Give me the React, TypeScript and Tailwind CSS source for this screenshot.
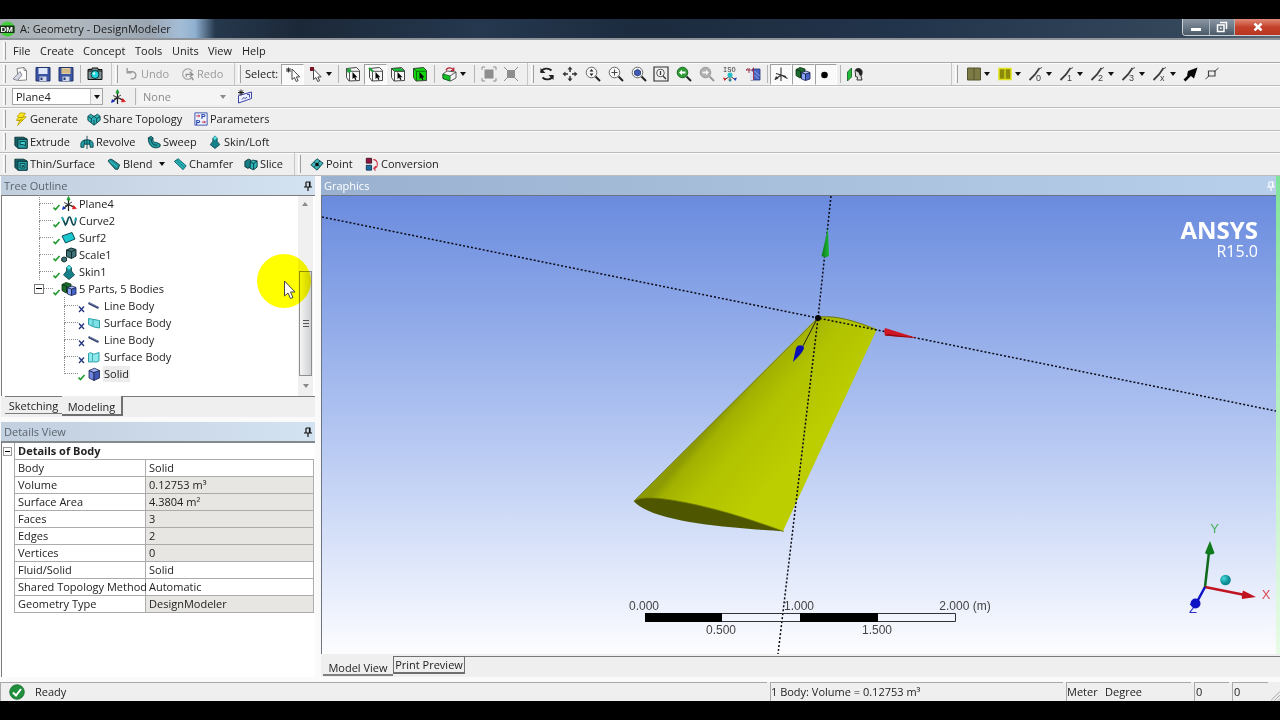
import type { ReactNode } from "react";

type Kids = { children?: ReactNode };

/* ---------- small building blocks ---------- */

function Ico({ children }: Kids) {
  return (
    <svg viewBox="0 0 16 16" className="h-4 w-4 shrink-0" aria-hidden="true">
      {children}
    </svg>
  );
}

function SmallIco({ children }: Kids) {
  return (
    <svg viewBox="0 0 16 16" className="h-3.5 w-3.5 shrink-0" aria-hidden="true">
      {children}
    </svg>
  );
}

function Caret({ muted = false }: { muted?: boolean }) {
  return (
    <svg viewBox="0 0 6 4" className="h-1 w-1.5 shrink-0" aria-hidden="true">
      <path d="M0 0h6L3 4z" fill={muted ? "#8a8a8a" : "#111"} />
    </svg>
  );
}

function Grip() {
  return (
    <div className="flex w-2 shrink-0 self-stretch py-0.5 pl-[3px]">
      <div className="w-[3px] border-r border-l border-r-[#a0a0a0] border-l-white" />
    </div>
  );
}

function Sep() {
  return (
    <div className="flex w-1.5 shrink-0 justify-center self-stretch py-0.5">
      <div className="w-px bg-[#b4b4b4]" />
    </div>
  );
}

function Group({ className, children }: Kids & { className: string }) {
  return (
    <div className={`flex items-center border-r border-[#c6c6c6] ${className}`}>
      <Grip />
      {children}
    </div>
  );
}

function IconButton({
  label,
  pressed = false,
  disabled = false,
  caret = false,
  className = "w-[23px]",
  children,
}: Kids & { label: string; pressed?: boolean; disabled?: boolean; caret?: boolean; className?: string }) {
  return (
    <button
      type="button"
      aria-label={label}
      aria-pressed={pressed || undefined}
      disabled={disabled}
      className={`flex h-[21px] shrink-0 items-center justify-center gap-0.5 border ${
        pressed ? "border-t-[#a0a0a0] border-r-white border-b-white border-l-[#a0a0a0] bg-[#fafafa]" : "border-transparent"
      } ${className}`}
    >
      {children}
      {caret && <Caret />}
    </button>
  );
}

function TextButton({ label, icon, className, caret = false, disabled = false }: { label: string; icon: ReactNode; className: string; caret?: boolean; disabled?: boolean }) {
  return (
    <button type="button" disabled={disabled} className={`flex shrink-0 items-center gap-0.5 whitespace-nowrap pl-px text-left disabled:text-[#9a9a9a] ${className}`}>
      {icon}
      <span>{label}</span>
      {caret && (
        <span className="ml-1 flex">
          <Caret />
        </span>
      )}
    </button>
  );
}

/* ---------- drawings ---------- */

const Cube = () => (
  <g stroke="#18224f" strokeWidth=".8" strokeLinejoin="round">
    <path d="M3 4.500 8 6.500v8L3 12z" fill="#6f86dc" />
    <path d="M8 6.500l5.500-2v7.500L8 14.500z" fill="#4057b4" />
    <path d="M3 4.500 8.500 2.200l5 2.300L8 6.500z" fill="#9fb2f2" />
  </g>
);

const TwoCubes = () => (
  <Ico>
    <path d="M1 3.500 5 1.500l5 1.500v7.500L5 12 1 9.500z" fill="#1d6b2c" stroke="#0b2d12" strokeWidth=".8" />
    <path d="M1 3.500 5.500 5v6.500" fill="none" stroke="#0b2d12" strokeWidth=".8" />
    <g stroke="#18224f" strokeWidth=".8">
      <path d="M6.500 6.500 10.500 8v6.500l-4-1.500z" fill="#8ba4f5" />
      <path d="M10.500 8l4.500-1.500V13l-4.500 1.500z" fill="#4763c8" />
      <path d="M6.500 6.500 11 5l4 1.500L10.500 8z" fill="#b4c4fb" />
    </g>
  </Ico>
);

const AxesIcon = () => (
  <Ico>
    <path d="M7.500 15V3M7.500 8.500l-5 4M7.500 8.500l6 3" stroke="#222" strokeWidth="1.200" fill="none" />
    <path d="M3 6.500l9 4M4 10l7-4" stroke="#333" strokeWidth=".9" />
    <path d="M6 4h3L7.500 .5z" fill="#1fa038" stroke="#1fa038" />
    <path d="M1 14l1-4 3 2.500z" fill="#1a2cc0" />
    <path d="M15.500 12.500l-4 .5 1-3.500z" fill="#e01818" stroke="#e01818" strokeWidth=".6" />
  </Ico>
);

const CursorPath = ({ x = 0, y = 0 }: { x?: number; y?: number }) => (
  <path transform={`translate(${x} ${y})`} d="M0 0v10.500l2.500-2 1.700 4 1.900-.8-1.700-3.800h3.300z" fill="#fff" stroke="#333" strokeWidth=".9" />
);

const SelectBox = ({ mode }: { mode: "point" | "edge" | "face" | "body" }) => (
  <Ico>
    <path d="M1.500 2.500 11.500 1.500l3 3v10l-10.500.5-2.500-3.500z" fill={mode === "body" ? "#12d512" : "#f7f7f7"} stroke="#333" strokeWidth=".9" />
    {mode === "face" && <path d="M1.500 2.500h9.500l3.500 2.800H4.500z" fill="#12c832" stroke="#0b5a18" strokeWidth=".6" />}
    <path d="M1.500 2.500 4.500 5.300h10M4.500 5.300V15" fill="none" stroke={mode === "body" ? "#07640b" : "#444"} strokeWidth=".9" />
    {mode === "point" && <circle cx="4" cy="4.500" r="2.300" fill="#29a347" />}
    {mode === "edge" && <path d="M1 2l4 3.500" stroke="#18a035" strokeWidth="2.200" />}
    <path d="M7.500 6v7l1.700-1.400 1 2.400 1.200-.5-1-2.300h2z" fill="#050505" />
  </Ico>
);

const Lens = ({ children, ring = "#666", handle = "#222", fill = "#f7f7f7" }: Kids & { ring?: string; handle?: string; fill?: string }) => (
  <Ico>
    <path d="M10.500 10.500l4.500 4.500" stroke={handle} strokeWidth="2" />
    <circle cx="6.500" cy="6.500" r="5.300" fill={fill} stroke={ring} strokeWidth="1" />
    {children}
  </Ico>
);

const EdgeIcon = ({ mark }: { mark: string }) => (
  <Ico>
    <path d="M1.500 14 7 8.500 11.500 2" stroke="#3c3c3c" strokeWidth="1.800" fill="none" />
    <path d="M10 3.500l4-2" stroke="#555" strokeWidth="1" />
    <text x="8" y="14.500" fontSize="9" fontFamily="Liberation Sans, sans-serif" fill="#444">{mark}</text>
  </Ico>
);

const Pin = ({ color = "#111" }: { color?: string }) => (
  <svg viewBox="0 0 10 10" className="h-2.5 w-2.5" aria-hidden="true">
    <path d="M3 1h4v5M3 1v5M1 6h8M5 6v4M6.500 1v5" stroke={color} strokeWidth="1.200" fill="none" />
  </svg>
);

const Check = () => (
  <svg viewBox="0 0 8 8" className="mt-1.5 h-2 w-2 shrink-0" aria-hidden="true">
    <path d="M.5 4.500 2.500 6.500l4-4.500" stroke="#1f9a2c" strokeWidth="1.600" fill="none" />
  </svg>
);

const Cross = () => (
  <svg viewBox="0 0 8 8" className="mt-1.5 h-2 w-2 shrink-0" aria-hidden="true">
    <path d="M1 1.500l5 5.500M6 1.500l-5 5.500" stroke="#23357f" strokeWidth="1.300" fill="none" />
  </svg>
);

const CurveIcon = () => (
  <Ico>
    <path d="M1 4l3.500 8C6.500 11 6.500 4 8.500 4s2 8 4.500 8c1 0 1.500-3 2-7" stroke="#0f4a52" strokeWidth="1.700" fill="none" />
    <path d="M1 4l1.500 3.500M14 8l1-3.500" stroke="#20a8b0" strokeWidth="1.800" />
  </Ico>
);

const SurfIcon = () => (
  <Ico>
    <path d="M1 6 11 2.500l3 6.500L4.500 13z" fill="#1cc8cf" stroke="#0b4a52" />
  </Ico>
);

const ScaleIcon = () => (
  <Ico>
    <path d="M5.500 3 10 1l5 1.500V9l-4.500 2.500-5-2z" fill="#3f7276" stroke="#102b2e" />
    <path d="M5.500 3l5 1.700L15 2.500M10.500 4.700v6.800" stroke="#102b2e" fill="none" />
    <path d="M.8 11 3 10l2.500.8v3L3.200 15l-2.400-1z" fill="#3f7276" stroke="#102b2e" />
  </Ico>
);

const SkinShape = () => (
  <>
    <path d="M8 1l2.500 2.500V7l3 4L8 15.500 2.500 11l3-4V3.500z" fill="#168088" stroke="#0a4046" strokeWidth=".8" />
    <path d="M8 1l2.500 2.500L8 6 5.500 3.500z" fill="#4fdde0" />
  </>
);

const LineBodyIcon = () => (
  <Ico>
    <path d="M2.500 5l10 5" stroke="#27355c" strokeWidth="2" />
    <path d="M3 4.700l9.500 4.700" stroke="#8ca8d8" strokeWidth=".7" />
  </Ico>
);

const SurfaceBodyA = () => (
  <Ico>
    <path d="M2.500 3.500 8 4.500l5.500 1V13L8 12l-5.500-2.500z" fill="#7fe0e6" stroke="#2aa0a8" />
    <path d="M7 4.500v6.500" stroke="#2aa0a8" strokeWidth=".8" />
  </Ico>
);

const SurfaceBodyB = () => (
  <Ico>
    <path d="M2.500 4.500c3-2 4 1 6 .5l4.500-1.500V12c-3 2-5 .5-6 .8L2.500 13z" fill="#8fe8ec" stroke="#2aa0a8" />
    <path d="M6.500 4v8" stroke="#2aa0a8" strokeWidth=".8" />
  </Ico>
);

/* ---------- title bar and menus ---------- */

function TitleBar() {
  return (
    <header className="flex h-[21px] items-start border-b-2 border-[#8d9399] bg-[linear-gradient(90deg,#a3abb0_0px,#b4bcc2_60px,#9ba6b2_150px,#a4bdd6_180px,#8fb0d0_195px,#26384d_215px,#1b2838_300px,#25384f_480px,#1c2b3e_640px,#22344b_900px,#34465a_1180px,#5b6a78_100%)]">
      <div className="flex h-[19px] flex-1 items-center gap-1 text-[#1d1d1d]">
        <svg viewBox="0 0 16 16" className="h-4 w-4" aria-hidden="true">
          <circle cx="7.500" cy="8" r="7.500" fill="#43cf3b" />
          <path d="M0 4.500h14.500v7.500H0z" fill="#182c18" />
          <text x="0.500" y="11" fontSize="8" fontWeight="700" fontFamily="Liberation Sans, sans-serif" fill="#fff">DM</text>
        </svg>
        <h1 className="whitespace-nowrap text-[11px]">A: Geometry - DesignModeler</h1>
      </div>
      <div className="flex h-[17px] w-[98px] overflow-hidden rounded-bl border-b border-l border-[#c9d0d6]">
        <button type="button" aria-label="Minimize" className="flex w-[27px] items-center justify-center border-r border-[#aab2ba] bg-linear-to-b from-[#8b97a3] to-[#4c5a69]">
          <span className="mt-1 h-[3px] w-2.5 bg-white" />
        </button>
        <button type="button" aria-label="Restore" className="flex w-[25px] items-center justify-center border-r border-[#aab2ba] bg-linear-to-b from-[#8b97a3] to-[#4c5a69]">
          <svg viewBox="0 0 12 12" className="h-3 w-3" aria-hidden="true">
            <path d="M4 1.500h6.500V8M1.500 4h6.500v6.500H1.500z" fill="none" stroke="#fff" strokeWidth="1.500" />
            <path d="M4 6.500h1.500v1.500H4z" fill="#fff" />
          </svg>
        </button>
        <button type="button" aria-label="Close" className="flex flex-1 items-center justify-center bg-linear-to-b from-[#e08a78] via-[#c4402a] to-[#b8361f]">
          <svg viewBox="0 0 10 8" className="h-2 w-2.5" aria-hidden="true">
            <path d="M1.500 .5l7 7M8.500 .5l-7 7" stroke="#fff" strokeWidth="2.500" />
          </svg>
        </button>
      </div>
    </header>
  );
}

const menus: [string, string][] = [
  ["File", "w-[27px]"],
  ["Create", "w-[43px]"],
  ["Concept", "w-[52px]"],
  ["Tools", "w-[37px]"],
  ["Units", "w-[36px]"],
  ["View", "w-[34px]"],
  ["Help", "w-[34px]"],
];

function MenuBar() {
  return (
    <nav className="flex h-[23px] items-center border-b border-[#a8a8a8]">
      <Grip />
      <div className="flex pl-[5px]">
        {menus.map(([name, width]) => (
          <button key={name} type="button" className={`text-left ${width}`}>
            {name}
          </button>
        ))}
      </div>
    </nav>
  );
}

const row = "flex items-center border-b border-[#bcbcbc] shadow-[inset_0_1px_0_#fcfcfc]";

function MainToolbar() {
  return (
    <div className={`${row} h-[23px] items-stretch`}>
      <Group className="w-[112px]">
        <IconButton label="New">
          <Ico>
            <path d="M5 2.500 12 1.500l2.500 3V14l-8 .5z" fill="#fff" stroke="#777" strokeWidth=".9" />
            <path d="M1 13 8 5.500l2 3.500-4.500 5.500z" fill="#d3d6e6" stroke="#777" strokeWidth=".8" />
            <path d="M12 1.500v3h2.500" fill="none" stroke="#777" strokeWidth=".8" />
          </Ico>
        </IconButton>
        <IconButton label="Save">
          <Ico>
            <path d="M1 1.500h14v13.500H1z" fill="#3a55a4" stroke="#21336b" />
            <path d="M3.500 2h9v6h-9z" fill="#dfe8fa" />
            <path d="M4.500 10.500h7V15h-7z" fill="#cfd6e6" />
            <path d="M5.500 11.500h2V14h-2z" fill="#22346c" />
          </Ico>
        </IconButton>
        <IconButton label="Save As">
          <Ico>
            <path d="M1 1.500h14v13.500H1z" fill="#3a55a4" stroke="#21336b" />
            <path d="M3.500 2h9v6h-9z" fill="#e6cf9e" />
            <path d="M3.500 4h9M3.500 6h9" stroke="#b09056" strokeWidth=".7" />
            <path d="M4.500 10.500h7V15h-7z" fill="#cfd6e6" />
            <path d="M5.500 11.500h2V14h-2z" fill="#22346c" />
          </Ico>
        </IconButton>
        <Sep />
        <IconButton label="Image capture">
          <Ico>
            <path d="M5 3.500V2h6v1.500h4v10H1v-10z" fill="#7f9294" stroke="#111" />
            <path d="M1 5h14M3 3.500V2.500" stroke="#111" />
            <circle cx="8" cy="8.500" r="4" fill="#1fd7df" stroke="#0b3438" />
            <circle cx="7" cy="7.500" r="1.200" fill="#d4fbfc" />
          </Ico>
        </IconButton>
      </Group>

      <Group className="w-[123px]">
        <div className="flex pl-1">
          <TextButton
            label="Undo"
            disabled
            className="w-[56px]"
            icon={
              <SmallIco>
                <path d="M3 5.500h5.500a4 4 0 1 1-2 7.500" fill="none" stroke="#9a9a9a" strokeWidth="1.600" />
                <path d="M2.500 1v5.500h5" fill="none" stroke="#9a9a9a" strokeWidth="1.600" />
              </SmallIco>
            }
          />
          <TextButton
            label="Redo"
            disabled
            className="w-[50px]"
            icon={
              <SmallIco>
                <path d="M12.500 12a6 6 0 1 1 .5-7" fill="none" stroke="#a8a8a8" strokeWidth="1.400" />
                <path d="M6 11V8.500h6.500M10 5.500l3.500 3-3.500 3M12 11.500l2 3.500" fill="none" stroke="#8f8f8f" strokeWidth="1.500" />
              </SmallIco>
            }
          />
        </div>
      </Group>

      <Group className="w-[293px]">
        <span className="w-[38px] pl-0.5">Select:</span>
        <IconButton label="New selection" pressed>
          <Ico>
            <path d="M1 4h5M3.500 1.500v5M1.500 2l4 4M5.500 2l-4 4" stroke="#222" strokeWidth=".9" />
            <CursorPath x={7} y={3} />
          </Ico>
        </IconButton>
        <IconButton label="Select mode" caret className="w-[31px]">
          <Ico>
            <path d="M2 1h4v4H2z" fill="#7d1022" />
            <CursorPath x={5.500} y={3} />
          </Ico>
        </IconButton>
        <Sep />
        <IconButton label="Selection filter: points">
          <SelectBox mode="point" />
        </IconButton>
        <IconButton label="Selection filter: edges" pressed>
          <SelectBox mode="edge" />
        </IconButton>
        <IconButton label="Selection filter: faces" className="w-[22px]">
          <SelectBox mode="face" />
        </IconButton>
        <IconButton label="Selection filter: bodies" className="w-[22px]">
          <SelectBox mode="body" />
        </IconButton>
        <Sep />
        <IconButton label="Extend selection" caret className="w-[34px]">
          <Ico>
            <path d="M1 8l4-3 9 1v6l-5.500 3L1 12.500z" fill="#f4f4f4" stroke="#333" strokeWidth=".8" />
            <path d="M1 8l7 2v5l-7-2.500z" fill="#14c427" stroke="#0a5a14" strokeWidth=".8" />
            <path d="M8 10l6-4" stroke="#333" strokeWidth=".8" />
            <path d="M4 4.500C5 1 10 1 11.500 4M11.800 1.500v3h-3" fill="none" stroke="#b81c30" strokeWidth="1.200" />
          </Ico>
        </IconButton>
        <Sep />
        <IconButton label="Expand" disabled>
          <Ico>
            <path d="M3.500 3.500h9v9h-9z" fill="#8e8e8e" />
            <path d="M1 4V1h3M12 1h3v3M15 12v3h-3M4 15H1v-3" fill="none" stroke="#8e8e8e" />
          </Ico>
        </IconButton>
        <IconButton label="Shrink" disabled className="w-[22px]">
          <Ico>
            <path d="M4 4h8v8H4z" fill="#8e8e8e" />
            <path d="M1 1l3 3M15 1l-3 3M15 15l-3-3M1 15l3-3" stroke="#8e8e8e" />
          </Ico>
        </IconButton>
      </Group>

      <Group className="w-[424px]">
        <div className="flex w-[228px]">
          <IconButton label="Rotate" className="flex-1">
            <Ico>
              <path d="M2 6.500C3 2 9.500 1.500 12.500 4.500M14 9.500c-1 4.500-7.500 5-10.500 2" fill="none" stroke="#222" strokeWidth="1.800" />
              <path d="M1.500 2v5h5zM14.500 14V9h-5z" fill="#222" />
            </Ico>
          </IconButton>
          <IconButton label="Pan" className="flex-1">
            <Ico>
              <path d="M8 3v3M8 10v3M3 8h3M10 8h3" stroke="#333" strokeWidth="1.500" />
              <path d="M8 .5l2.500 3h-5zM8 15.500l2.500-3h-5zM.5 8l3-2.500v5zM15.500 8l-3-2.500v5z" fill="#333" />
            </Ico>
          </IconButton>
          <IconButton label="Zoom" className="flex-1">
            <Lens>
              <path d="M6.500 3l2 2.500h-4zM6.500 10l2-2.500h-4z" fill="#222" />
            </Lens>
          </IconButton>
          <IconButton label="Zoom in" className="flex-1">
            <Lens>
              <path d="M3.500 6.500h6M6.500 3.500v6" stroke="#444" />
            </Lens>
          </IconButton>
          <IconButton label="Zoom to fit" className="flex-1">
            <Lens>
              <path d="M3.500 5l3-1.700 3 1.700v3.500l-3 1.500-3-1.500z" fill="#3e59b8" stroke="#16265c" strokeWidth=".7" />
            </Lens>
          </IconButton>
          <IconButton label="Box zoom" className="flex-1">
            <Ico>
              <path d="M1 1h14v14H1z" fill="none" stroke="#333" strokeWidth="1.200" />
              <circle cx="7.500" cy="7" r="3.800" fill="#fafafa" stroke="#555" />
              <path d="M7.500 5v4M10 10l3 3" stroke="#333" strokeWidth="1.300" />
            </Ico>
          </IconButton>
          <IconButton label="Previous view" className="flex-1">
            <Lens fill="#2f9b34" ring="#1b6a20">
              <path d="M3 6.500l3-2.800v1.800h3.500v2H6v1.800z" fill="#fff" />
            </Lens>
          </IconButton>
          <IconButton label="Next view" disabled className="flex-1">
            <Lens fill="#b0b0b0" ring="#9a9a9a" handle="#9a9a9a">
              <path d="M10 6.500l-3-2.800v1.800H3.500v2H7v1.800z" fill="#f2f2f2" />
            </Lens>
          </IconButton>
          <IconButton label="Isometric view" className="flex-1">
            <Ico>
              <text x="1" y="5.500" fontSize="7" fontFamily="Liberation Mono, monospace" fill="#333">ISO</text>
              <path d="M8 10l-5 3.500M8 10l5 3.500M8 10v5" stroke="#444" />
              <circle cx="8" cy="9" r="2.500" fill="#22c0c6" />
              <path d="M1 11.500l3.500 1-2 2.500z" fill="#d02020" />
              <path d="M15 11.500l-3.500 1 2 2.500z" fill="#2540b8" />
              <path d="M8 16l-2-2.500h4z" fill="#1f7f8a" />
            </Ico>
          </IconButton>
          <IconButton label="Look at face" className="flex-1">
            <Ico>
              <path d="M7 3h8v11H5.500" fill="#4864c2" stroke="#22326e" strokeWidth=".8" />
              <path d="M9.500 5l5 5M9.500 9l4 4" stroke="#93a6ea" />
              <path d="M5 5.500h4V14H5z" fill="#dfe3f4" />
              <path d="M1 4h8M4 2v5M1 4l2-1.500M8.500 1.500V14" stroke="#9c2540" strokeWidth=".9" fill="none" />
            </Ico>
          </IconButton>
        </div>
        <Sep />
        <div className="flex w-[67px]">
          <IconButton label="Display plane" pressed className="flex-1">
            <Ico>
              <path d="M8 1.500V15M8 9l-6 4.500M8 9l6.500 3.500M3 7.500l10 3" stroke="#333" strokeWidth="1.100" fill="none" />
              <path d="M1.500 14l1.500-4 2.500 2.500z" fill="#333" />
            </Ico>
          </IconButton>
          <IconButton label="Display model" pressed className="flex-1">
            <TwoCubes />
          </IconButton>
          <IconButton label="Display points" pressed className="flex-1">
            <Ico>
              <circle cx="6.500" cy="9" r="3.300" fill="#050505" />
            </Ico>
          </IconButton>
        </div>
        <Sep />
        <IconButton label="Look at">
          <Ico>
            <path d="M.5 6l4-4v9l-4 4z" fill="#21bb38" stroke="#0d5a1a" strokeWidth=".8" />
            <path d="M8 5c1-3 6-3 7 0 .5 3-.5 4-1 5l1 4H10l.5-3-2-.5L8.500 8z" fill="#ddd" stroke="#222" strokeWidth=".9" />
            <path d="M8 4.500c1-3 6-3 7 .5v3.500l-2 1.500-1.500-3.500z" fill="#222" />
          </Ico>
        </IconButton>
      </Group>

      <div className="flex flex-1 items-center">
        <Grip />
        <div className="w-0.5" />
        <IconButton label="Face colour" caret className="w-[31px]">
          <Ico>
            <path d="M1.500 2h13v12h-13z" fill="#7c7a45" stroke="#56552e" />
            <path d="M8 2v12" stroke="#56552e" />
          </Ico>
        </IconButton>
        <IconButton label="Edge colour" caret className="w-[31px]">
          <Ico>
            <path d="M2 2.500h12v11H2z" fill="#8b8a0a" stroke="#e2e21c" strokeWidth="1.500" />
            <path d="M8 2v12" stroke="#e2e21c" strokeWidth="1.200" />
          </Ico>
        </IconButton>
        {["0", "1", "2", "3", "x"].map((mark) => (
          <IconButton key={mark} label={`Edge joints ${mark}`} caret className="w-[31px]">
            <EdgeIcon mark={mark} />
          </IconButton>
        ))}
        <IconButton label="Display edge direction">
          <Ico>
            <path d="M1.500 14.500 7 9" stroke="#050505" strokeWidth="2.600" />
            <path d="M14.500 1.500 11 12.500 8 10 4 9.500 5 5z" fill="#050505" />
          </Ico>
        </IconButton>
        <IconButton label="Display vertices" className="w-5">
          <Ico>
            <path d="M1.500 13 5 10M10 6l4.500-4" stroke="#444" />
            <path d="M4.500 5h6.500v5H4.500z" fill="none" stroke="#444" strokeWidth="1.200" />
          </Ico>
        </IconButton>
      </div>
    </div>
  );
}

function PlaneToolbar() {
  return (
    <div className={`${row} h-[22px]`}>
      <Grip />
      <div className="relative ml-1 w-[91px]">
        <select aria-label="Active plane" className="block h-[17px] w-full appearance-none border border-[#a5a5a5] bg-white pl-[3px]">
          <option>Plane4</option>
        </select>
        <span className="pointer-events-none absolute inset-y-px right-px flex w-3 items-center justify-center border-l border-[#c8c8c8] bg-[#f2f2f2]">
          <Caret />
        </span>
      </div>
      <div className="flex w-[29px] items-center justify-center">
        <button type="button" aria-label="New plane">
          <AxesIcon />
        </button>
      </div>
      <Sep />
      <div className="relative w-[92px]">
        <select aria-label="Active sketch" disabled className="block h-[17px] w-full appearance-none bg-[#f4f4f4] pl-[5px] text-[#8a8a8a]">
          <option>None</option>
        </select>
        <span className="pointer-events-none absolute inset-y-0 right-1 flex items-center">
          <Caret muted />
        </span>
      </div>
      <IconButton label="New sketch" className="ml-0.5 w-[25px]">
        <Ico>
          <path d="M1.500 14V6.500L14.500 3v6.500z" fill="#eef0ff" stroke="#3b45a8" />
          <path d="M5 10.500c2-4 3 1 5-2.500M10 5.500h2.500v3" fill="none" stroke="#3b45a8" />
          <path d="M1 3.500h6M4 .5v6M2 1.500l4 4M6 1.500l-4 4" stroke="#111" strokeWidth=".9" />
        </Ico>
      </IconButton>
    </div>
  );
}

const Extrude = ({ inner }: { inner: string }) => (
  <SmallIco>
    <path d="M1 2.500h10l4 2v10.500H4.500L1 12z" fill="#156066" stroke="#0a2f33" />
    <path d="M4.500 5h10.500v10H4.500z" fill="#2aa7ad" stroke="#0a2f33" />
    <path d={inner} fill="#49d8dc" stroke="#0a2f33" />
  </SmallIco>
);

function FeatureToolbars() {
  return (
    <>
      <div className={`${row} h-[23px]`}>
        <Grip />
        <div className="flex pl-[5px]">
          <TextButton
            className="w-[73px]"
            label="Generate"
            icon={
              <SmallIco>
                <path d="M7 1l6 .5-2.500 3.500 3.500.5L4 15.500l2.500-5.500-4-.5L5.500 6 3.500 5.500z" fill="#f8e71c" stroke="#b79a00" strokeWidth=".9" />
                <path d="M6 6.500l5-.5M5 9.500l5-.5" stroke="#857000" strokeWidth=".8" />
              </SmallIco>
            }
          />
          <TextButton
            className="w-[107px]"
            label="Share Topology"
            icon={
              <SmallIco>
                <path d="M1 5l3-2.500L8 5l4-2.500L15 5v4.500L8 15l-7-5.500z" fill="#2cb4ba" stroke="#0b3f43" />
                <path d="M1 5l4 2.500V12M15 5l-4 2.500V12M5 7.500 8 5l3 2.500M8 9v6" fill="none" stroke="#0b3f43" />
              </SmallIco>
            }
          />
          <TextButton
            className="w-[80px]"
            label="Parameters"
            icon={
              <SmallIco>
                <path d="M1 1h14v14H1z" fill="#eef3ff" stroke="#2b48a6" />
                <text x="8" y="8" fontSize="8" fontWeight="700" fontFamily="Liberation Sans, sans-serif" fill="#1f3ea8">P</text>
                <text x="2" y="14.500" fontSize="8" fontWeight="700" fontFamily="Liberation Sans, sans-serif" fill="#1f3ea8">P</text>
                <path d="M2.500 4.500h4M5 3l1.500 1.500L5 6M9 11.500h4M11.500 10l1.500 1.500-1.500 1.500" stroke="#c02038" fill="none" />
              </SmallIco>
            }
          />
        </div>
      </div>
      <div className={`${row} h-[22px]`}>
        <Grip />
        <div className="flex pl-[5px]">
          <TextButton className="w-[66px]" label="Extrude" icon={<Extrude inner="M7 7.500h6v5l-2-1.500H7z" />} />
          <TextButton
            className="w-[67px]"
            label="Revolve"
            icon={
              <SmallIco>
                <path d="M1 10c0-6 14-6 14 0v4h-3.500v-3.500h-7V14H1z" fill="#23a4aa" stroke="#0b3f43" />
                <path d="M8 1v15M5 5.500v5M11 5.500v5" stroke="#0b3f43" />
              </SmallIco>
            }
          />
          <TextButton
            className="w-[61px]"
            label="Sweep"
            icon={
              <SmallIco>
                <path d="M1.500 3l3.500-1.500 2 2c-1 3 1 5.500 4 5l4 2v2.500c-5 4-14 1-13.500-10z" fill="#1f999f" stroke="#0b3f43" />
                <path d="M2 3.500l3 1.500 2-1.500M5 5c0 5 3 7 6.500 6.500" fill="none" stroke="#0b3f43" />
              </SmallIco>
            }
          />
          <TextButton className="w-[60px]" label="Skin/Loft" icon={<SmallIco><SkinShape /></SmallIco>} />
        </div>
      </div>
      <div className={`${row} h-[23px]`}>
        <Grip />
        <div className="flex w-[287px] self-stretch border-r border-[#c6c6c6] pl-[5px]">
          <TextButton className="w-[93px]" label="Thin/Surface" icon={<Extrude inner="M7 7.500h5.500v5H7zM9 9.500h2v1.500H9z" />} />
          <TextButton
            className="w-[66px]"
            label="Blend"
            caret
            icon={
              <SmallIco>
                <path d="M1.500 5c0-2.500 3-3 4.500-2l8.500 6-2 5h-3z" fill="#1a8f96" stroke="#0b3f43" />
                <path d="M3 4.500l8.500 6.500" stroke="#49d0d4" />
              </SmallIco>
            }
          />
          <TextButton
            className="w-[71px]"
            label="Chamfer"
            icon={
              <SmallIco>
                <path d="M1.500 5 6 2l9 8-3.500 4.500z" fill="#28b4b9" stroke="#0b5a60" />
                <path d="M4 3.500l9 8.500" stroke="#0b5a60" strokeWidth=".7" />
              </SmallIco>
            }
          />
          <TextButton
            className="w-[40px]"
            label="Slice"
            icon={
              <SmallIco>
                <path d="M1 5l4-2.500 3 1.200V11l-3.500 2L1 11z" fill="#177d84" stroke="#0b3235" />
                <path d="M7 6l3-2.500 5 1v7L11 14.500 7 13z" fill="#2bb4ba" stroke="#0b3235" />
                <path d="M7 6l4 1.500 4-3M11 7.500v7" fill="none" stroke="#0b3235" />
              </SmallIco>
            }
          />
        </div>
        <Grip />
        <div className="flex pl-[6px]">
          <TextButton
            className="w-[55px]"
            label="Point"
            icon={
              <SmallIco>
                <path d="M1 9 8 2l7 5-7 8z" fill="#3fb4ba" stroke="#0b3f43" />
                <path d="M4.500 5.500l7 5.500M4.500 12l7-7.500" stroke="#0b3f43" />
                <circle cx="8" cy="8.500" r="2" fill="#111" />
              </SmallIco>
            }
          />
          <TextButton
            className="w-[76px]"
            label="Conversion"
            icon={
              <SmallIco>
                <path d="M1.500 1.500h6v5.500h-6z" fill="#8e1640" stroke="#3d0a1c" />
                <path d="M1.500 9.500h6v5.500h-6z" fill="#1c6ea6" stroke="#0b3350" />
                <path d="M9.500 3c6 0 6 10 1 10M12.500 10.500 10 13l2 2.500" fill="none" stroke="#cf3043" strokeWidth="1.200" />
              </SmallIco>
            }
          />
        </div>
      </div>
    </>
  );
}

/* ---------- left panels ---------- */

function PanelHeader({ title }: { title: string }) {
  return (
    <div className="flex h-[19px] shrink-0 items-center justify-between bg-linear-to-r from-[#c2cfde] to-[#d3e2f1] pr-0.5 pl-[3px] text-[#5b646e]">
      <h2>{title}</h2>
      <button type="button" aria-label={`Pin ${title}`}>
        <Pin />
      </button>
    </div>
  );
}

type Node = { label: string; icon: ReactNode; ok: boolean; selected?: boolean };

const features: Node[] = [
  { label: "Plane4", icon: <AxesIcon />, ok: true },
  { label: "Curve2", icon: <CurveIcon />, ok: true },
  { label: "Surf2", icon: <SurfIcon />, ok: true },
  { label: "Scale1", icon: <ScaleIcon />, ok: true },
  { label: "Skin1", icon: <Ico><SkinShape /></Ico>, ok: true },
];

const bodies: Node[] = [
  { label: "Line Body", icon: <LineBodyIcon />, ok: false },
  { label: "Surface Body", icon: <SurfaceBodyA />, ok: false },
  { label: "Line Body", icon: <LineBodyIcon />, ok: false },
  { label: "Surface Body", icon: <SurfaceBodyB />, ok: false },
  { label: "Solid", icon: <Ico><Cube /></Ico>, ok: true, selected: true },
];

function TreeItem({ node, last = false }: { node: Node; last?: boolean }) {
  return (
    <li className="flex h-[17px] items-center">
      <span className="flex h-full w-3.5 shrink-0 flex-col">
        <span className="h-[9px] border-b border-l border-dotted border-[#8c8c8c]" />
        <span className={`flex-1 ${last ? "" : "border-l border-dotted border-[#8c8c8c]"}`} />
      </span>
      {node.ok ? <Check /> : <Cross />}
      <span className="flex w-4 shrink-0">{node.icon}</span>
      <span className={`ml-px px-px leading-4 ${node.selected ? "bg-[#ececec]" : ""}`}>{node.label}</span>
    </li>
  );
}

function TreePanel() {
  return (
    <section className="relative flex h-[201px] shrink-0 border-t border-l border-[#7b7b7b] bg-white">
      <div className="-mt-px flex-1">
        <ul className="pl-[37px]">
          {features.map((n) => (
            <TreeItem key={n.label} node={n} />
          ))}
        </ul>
        <div className="flex h-[17px] items-center pl-8">
          <button type="button" aria-label="Collapse bodies" className="flex h-2.5 w-2.5 items-center justify-center border border-[#777] bg-white">
            <span className="h-px w-1.5 bg-black" />
          </button>
          <span className="w-[9px] border-t border-dotted border-[#8c8c8c]" />
          <Check />
          <TwoCubes />
          <span className="ml-0.5">5 Parts, 5 Bodies</span>
        </div>
        <ul className="pl-[62px]">
          {bodies.map((n, i) => (
            <TreeItem key={i} node={n} last={i === bodies.length - 1} />
          ))}
        </ul>
      </div>
      <div className="mr-0.5 flex w-[15px] flex-col items-center bg-[#f0f0f0]">
        <button type="button" aria-label="Scroll up" className="flex h-4 w-full rotate-180 items-center justify-center">
          <Caret muted />
        </button>
        <div className="h-[59px]" />
        <div className="flex h-[105px] w-[13px] flex-col items-center justify-center gap-0.5 border border-[#8e8e8e] bg-linear-to-r from-[#f4f4f4] to-[#cfd0d2]">
          <span className="h-px w-1.5 bg-[#555]" />
          <span className="h-px w-1.5 bg-[#555]" />
          <span className="h-px w-1.5 bg-[#555]" />
        </div>
        <button type="button" aria-label="Scroll down" className="flex h-5 w-full items-center justify-center">
          <Caret muted />
        </button>
      </div>
      <svg viewBox="0 0 56 56" className="pointer-events-none absolute top-[57px] right-[3px] h-14 w-14 mix-blend-multiply" aria-hidden="true">
        <circle cx="28" cy="28" r="27" fill="#ffff00" />
      </svg>
      <svg viewBox="0 0 56 56" className="pointer-events-none absolute top-[57px] right-[3px] h-14 w-14" aria-hidden="true">
        <path d="M28.500 28v15l3.500-3 2.500 5.500 2.500-1-2.500-5.500h4.500z" fill="#fff" stroke="#444" strokeWidth="1" />
      </svg>
    </section>
  );
}

const details: { name: string; value: ReactNode; locked: boolean }[] = [
  { name: "Body", value: "Solid", locked: false },
  { name: "Volume", value: "0.12753 m³", locked: true },
  { name: "Surface Area", value: "4.3804 m²", locked: true },
  { name: "Faces", value: "3", locked: true },
  { name: "Edges", value: "2", locked: true },
  { name: "Vertices", value: "0", locked: true },
  { name: "Fluid/Solid", value: "Solid", locked: false },
  { name: "Shared Topology Method", value: "Automatic", locked: false },
  { name: "Geometry Type", value: "DesignModeler", locked: true },
];

function DetailsPanel() {
  return (
    <section className="flex flex-1 items-start border-t-2 border-l border-t-[#85898e] border-l-[#7b7b7b] bg-white pr-px">
      <button type="button" aria-label="Collapse details" className="mx-px mt-1 flex h-[9px] w-[9px] shrink-0 items-center justify-center border border-[#999]">
        <span className="h-px w-[5px] bg-black" />
      </button>
      <div className="min-w-0 flex-1 pl-px">
        <table className="w-full table-fixed border-collapse text-left">
          <colgroup>
            <col className="w-[131px]" />
            <col />
          </colgroup>
          <thead>
            <tr className="h-4 border-b border-l border-[#ababab]">
              <th colSpan={2} className="py-0 pl-[3px] leading-[15px] font-bold">Details of Body</th>
            </tr>
          </thead>
          <tbody>
            {details.map((d) => (
              <tr key={d.name} className="h-[17px]">
                <th scope="row" className="border border-[#ababab] py-0 pl-[3px] leading-4 font-normal whitespace-nowrap">{d.name}</th>
                <td className={`border border-[#ababab] py-0 pl-[3px] leading-4 ${d.locked ? "bg-[#e8e6e2]" : "bg-white"}`}>{d.value}</td>
              </tr>
            ))}
          </tbody>
        </table>
      </div>
    </section>
  );
}

function LeftColumn() {
  return (
    <aside className="flex w-[315px] shrink-0 flex-col pl-px">
      <PanelHeader title="Tree Outline" />
      <TreePanel />
      <div className="flex h-[21px] shrink-0 bg-[#efefef] pl-1" role="tablist">
        <button type="button" role="tab" aria-selected="false" className="h-[18px] w-[57px] border-t border-b border-t-[#7b7b7b] border-b-[#7b7b7b] pt-px">Sketching</button>
        <button type="button" role="tab" aria-selected="true" className="h-5 w-[61px] border-r-2 border-b-2 border-[#6f6f6f] pt-[3px]">Modeling</button>
        <div className="flex-1 border-t border-[#7b7b7b]" />
      </div>
      <div className="h-[5px] shrink-0" />
      <PanelHeader title="Details View" />
      <DetailsPanel />
    </aside>
  );
}

/* ---------- graphics view ---------- */

function Scene() {
  return (
    <svg viewBox="322 196 954 458" preserveAspectRatio="xMidYMid slice" className="absolute inset-0 h-full w-full" aria-hidden="true">
      <defs>
        <linearGradient id="skin" gradientUnits="userSpaceOnUse" x1="726" y1="408" x2="790" y2="462">
          <stop offset="0" stopColor="#8d9a04" />
          <stop offset=".1" stopColor="#a2b100" />
          <stop offset=".4" stopColor="#b1c200" />
          <stop offset="1" stopColor="#bccd00" />
        </linearGradient>
        <linearGradient id="coneY"><stop offset="0" stopColor="#0c7a1c" /><stop offset="1" stopColor="#1cb834" /></linearGradient>
        <radialGradient id="ball" cx=".35" cy=".35"><stop offset="0" stopColor="#48d8dc" /><stop offset="1" stopColor="#0d8a92" /></radialGradient>
      </defs>
      <path d="M818 317C838 315 858 322 877 329L783 531C730 522 670 504 634 501z" fill="url(#skin)" />
      <path d="M818 317C838 315 858 322 877 330" fill="none" stroke="#5d6600" strokeWidth=".8" />
      <path d="M818 318 634 501" stroke="#6f7a20" strokeWidth=".8" />
      <path d="M634 501.500C638 496 660 497 690 503.500 730 512 760 523 784 531.500 740 528 655 524 634 501.500z" fill="#4e5700" />
      <path d="M634 501.500C638 496 660 497 690 503.500 730 512 760 523 784 531.500" fill="none" stroke="#727d00" strokeWidth=".8" />
      <g stroke="#0a0a14" strokeWidth="1.500" strokeDasharray="2 2" fill="none">
        <path d="M322 217 818 318 1276 411" />
        <path d="M831 196 818 318 778 654" />
      </g>
      <path d="M817 319 803 346" stroke="#222" strokeWidth="1" />
      <circle cx="818" cy="318" r="3" fill="#050505" />
      <path d="M828 228l1 28c-2 1.500-5.500 1.500-7.500 0z" fill="url(#coneY)" />
      <path d="M917 338l-32-10c-1 2-1 5 0 7.500z" fill="#d01622" />
      <path d="M885 335.500c10 1 20 2 32 2.500l-30-4z" fill="#8e0a14" />
      <path d="M793 362l3-14c2-4 8-3 8 0-.5 3-5 8-11 14z" fill="#0a10b4" />

      <g fill="#444" fontFamily="Liberation Sans, sans-serif" fontSize="12" textAnchor="middle">
        <path d="M645.500 613.500h310v8h-310z" fill="none" stroke="#333" />
        <path d="M645 613h77v9h-77zM800 613h78v9h-78z" fill="#000" />
        <text x="644" y="610">0.000</text>
        <text x="799" y="610">1.000</text>
        <text x="965" y="610">2.000 (m)</text>
        <text x="721" y="634">0.500</text>
        <text x="877" y="634">1.500</text>
      </g>

      <path d="M1205 587l4-35" stroke="#0e6a1a" strokeWidth="2.500" />
      <path d="M1210 541l4.500 12c-2 2-7 2-9.500 0z" fill="#0e7a1c" />
      <path d="M1205 587l40 8" stroke="#c01420" strokeWidth="2.500" />
      <path d="M1256 597l-13-6.500c-1 3-1.500 6-1 8.500z" fill="#c01420" />
      <path d="M1205 587l-7 13" stroke="#0d12c4" strokeWidth="2.500" />
      <g fontFamily="Liberation Sans, sans-serif" fontSize="13" textAnchor="middle">
        <text x="1193" y="613" fill="#2a30c8">Z</text>
        <text x="1214.500" y="533" fill="#48b058">Y</text>
        <text x="1266" y="599" fill="#dc4a54">X</text>
      </g>
      <circle cx="1195.500" cy="603.500" r="5" fill="#0d12c4" />
      <circle cx="1225.500" cy="580" r="5.300" fill="url(#ball)" />
    </svg>
  );
}

function GraphicsColumn() {
  return (
    <main className="flex min-w-0 flex-1 flex-col">
      <div className="flex flex-1">
        <div className="flex min-w-0 flex-1 flex-col">
          <div className="flex h-[19px] shrink-0 items-center justify-between bg-linear-to-r from-[#9ab1cf] to-[#b7cfea] pl-[3px] text-white">
            <h2>Graphics</h2>
            <button type="button" aria-label="Pin Graphics">
              <Pin color="#fff" />
            </button>
          </div>
          <div className="relative flex-1 overflow-hidden border-t border-l border-[#6b7480] bg-linear-to-b from-[#6a8bde] to-[#fdfdff]">
            <Scene />
            <div className="absolute top-[21px] right-[18px] text-right font-['Open_Sans','Noto_Sans',sans-serif] text-white">
              <p className="text-2xl leading-[26px] font-bold">ANSYS</p>
              <p className="text-base leading-4">R15.0</p>
            </div>
          </div>
        </div>
        <div className="w-1 bg-linear-to-b from-[#7fe39a] to-[#e8fbe6]" />
      </div>
      <div className="flex h-[23px] shrink-0 bg-[#efefef] pl-0.5" role="tablist">
        <button type="button" role="tab" aria-selected="true" className="h-[22px] w-[70px] border-b-2 border-[#808080] pt-1.5">Model View</button>
        <button type="button" role="tab" aria-selected="false" className="mt-0.5 h-[18px] w-[72px] border border-b-2 border-[#6f6f6f] leading-4">Print Preview</button>
        <div className="mt-0.5 flex-1 border-t border-[#7b7b7b]" />
      </div>
    </main>
  );
}

/* ---------- status bar ---------- */

const cell = "flex items-center border-t border-l border-[#a8a8a8]";

function StatusBar() {
  return (
    <footer className="flex h-[19px] shrink-0 gap-[3px] bg-[#efefef]">
      <div className={`${cell} flex-1 gap-2.5`}>
        <svg viewBox="0 0 16 16" className="ml-2 h-4 w-4" aria-hidden="true">
          <circle cx="8" cy="8" r="7.300" fill="#1f8f3c" stroke="#17702e" strokeWidth=".8" />
          <path d="M4 8.500l3 3 5-6.500" fill="none" stroke="#fff" strokeWidth="2" />
        </svg>
        <span>Ready</span>
      </div>
      <div className={`${cell} w-[293px]`}>1 Body: Volume = 0.12753 m³</div>
      <div className={`${cell} w-[125px]`}>
        <span className="w-[38px]">Meter</span>
        <span>Degree</span>
      </div>
      <div className={`${cell} w-[35px] pl-px`}>0</div>
      <div className={`${cell} w-[36px] pl-px`}>0</div>
      <div className="flex w-[9px] items-end">
        <svg viewBox="0 0 10 10" className="h-2.5 w-2.5" aria-hidden="true">
          <path d="M0 10 10 0M4 10l6-6M8 10l2-2" stroke="#999" />
        </svg>
      </div>
    </footer>
  );
}

export default function App() {
  return (
    <div className="flex min-h-screen flex-col bg-black py-[19px] font-['Open_Sans','Noto_Sans',sans-serif] text-[11px] leading-4 text-[#222]">
      <TitleBar />
      <div className="shrink-0 bg-[#efefef]">
        <MenuBar />
        <MainToolbar />
        <PlaneToolbar />
        <FeatureToolbars />
      </div>
      <div className="flex flex-1 gap-1.5 bg-[#fafafa] pb-[5px]">
        <LeftColumn />
        <GraphicsColumn />
      </div>
      <StatusBar />
    </div>
  );
}
